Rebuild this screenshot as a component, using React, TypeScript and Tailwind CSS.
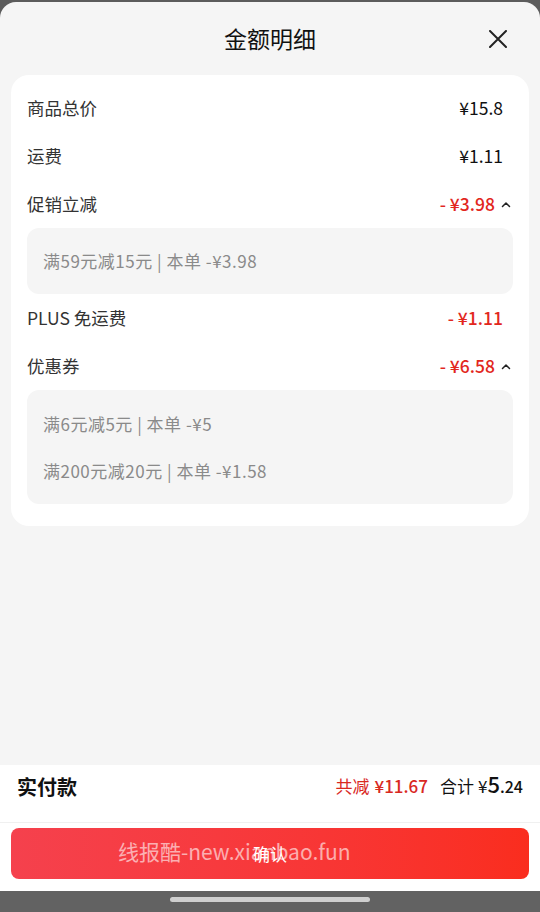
const font = { fontFamily: '"Noto Sans CJK SC", "Noto Sans", sans-serif' };

const ChevronUp = () => (
  <svg width="10" height="7" viewBox="0 0 10 7" className="ml-[6px]">
    <path d="M1.5 5.5 L5 2 L8.5 5.5" fill="none" stroke="#222" strokeWidth="1.5" strokeLinecap="round" strokeLinejoin="round" />
  </svg>
);

const Row = ({ label, value, red, chevron }: { label: string; value: string; red?: boolean; chevron?: boolean }) => (
  <div className="h-12 flex items-center justify-between">
    <span className="text-[17.5px] text-[#333]">{label}</span>
    <div className={`flex items-center ${chevron ? "pr-[2px]" : "pr-[10px]"}`}>
      <span className={red ? "text-[17.5px] font-medium text-[#e2271d]" : "text-[17.5px] text-[#111]"}>{value}</span>
      {chevron && <ChevronUp />}
    </div>
  </div>
);

export default function App() {
  return (
    <div className="h-[912px] w-[540px] bg-[#5c5c5c] flex flex-col overflow-hidden" style={font}>
      <div className="mt-[2px] flex-1 bg-[#f5f5f5] rounded-t-[16px] flex flex-col">
        <div className="h-[73px] flex items-center justify-center relative">
          <span className="text-[23px] text-[#111]">金额明细</span>
          <svg width="18" height="18" viewBox="0 0 18 18" className="absolute right-[33px] top-[28px]">
            <path d="M1 1 L17 17 M17 1 L1 17" stroke="#222" strokeWidth="2" strokeLinecap="round" />
          </svg>
        </div>

        <div className="mx-[11px] bg-white rounded-[18px] px-4 pt-[9px] pb-[22px]">
          <Row label="商品总价" value="¥15.8" />
          <Row label="运费" value="¥1.11" />
          <Row label="促销立减" value="- ¥3.98" red chevron />
          <div className="h-[66px] bg-[#f5f5f5] rounded-[12px] px-4 flex items-center">
            <span className="text-[17px] tracking-[0.5px] text-[#8a8a8a]">满59元减15元 | 本单 -¥3.98</span>
          </div>
          <Row label="PLUS 免运费" value="- ¥1.11" red />
          <Row label="优惠券" value="- ¥6.58" red chevron />
          <div className="bg-[#f5f5f5] rounded-[12px] px-4 py-[10px]">
            <div className="h-[47px] flex items-center text-[17px] tracking-[0.5px] text-[#8a8a8a]">满6元减5元 | 本单 -¥5</div>
            <div className="h-[47px] flex items-center text-[17px] tracking-[0.5px] text-[#8a8a8a]">满200元减20元 | 本单 -¥1.58</div>
          </div>
        </div>

        <div className="flex-1" />

        <div className="bg-white">
          <div className="h-[58px] flex items-start justify-between pl-[17px] pr-[17px] pt-[7px] border-b border-[#f0f0f0]">
            <span className="text-[20px] font-bold text-[#111]">实付款</span>
            <div className="flex items-baseline">
              <span className="text-[17px] text-[#d9291f]">共减</span>
              <span className="text-[17px] font-medium text-[#d9291f] ml-[5px]">¥11.67</span>
              <span className="text-[17px] text-[#111] ml-[12px]">合计</span>
              <span className="text-[17px] text-[#111] ml-[4px]">¥</span>
              <span className="text-[22px] font-medium text-[#111] leading-none">5</span>
              <span className="text-[16px] font-medium text-[#111]">.24</span>
            </div>
          </div>
          <div className="pt-[5px] pb-[12px] px-[11px]">
            <div className="relative h-[51px] rounded-[8px] bg-gradient-to-r from-[#f5414d] to-[#fa2d1e] flex items-center justify-center">
              <span className="text-[17px] text-white">确认</span>
              <span className="absolute left-[107px] top-[8px] text-[21px] text-white/60 whitespace-nowrap pointer-events-none">线报酷-new.xianbao.fun</span>
            </div>
          </div>
        </div>
      </div>
      <div className="h-[21px] bg-[#626262] flex justify-center pt-[6px]">
        <div className="w-[200px] h-[5px] rounded-full bg-[#cfcfcf]" />
      </div>
    </div>
  );
}
